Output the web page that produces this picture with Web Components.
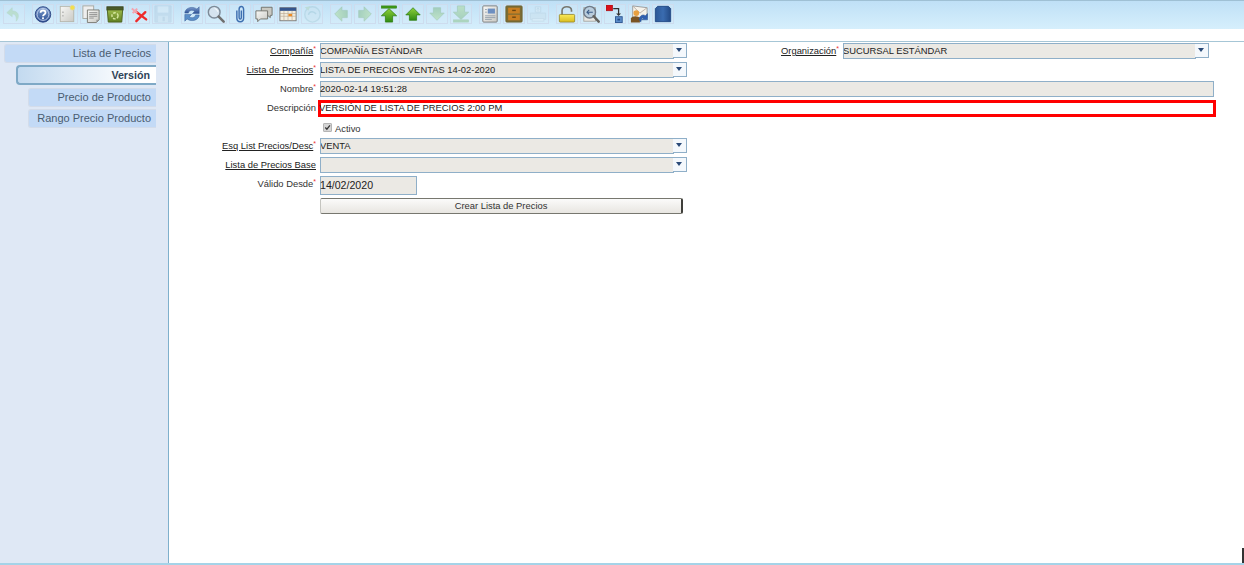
<!DOCTYPE html>
<html lang="es"><head><meta charset="utf-8"><title>Lista de Precios</title>
<style>html,body{margin:0;padding:0;background:#fff;font-family:"Liberation Sans",Arial,sans-serif}</style>
</head><body>
<x-app></x-app>
<script>
const grads=`<defs>
<linearGradient id="gb" x1="0" y1="0" x2="0" y2="1"><stop offset="0" stop-color="#7f9fd0"/><stop offset="1" stop-color="#2c4f93"/></linearGradient>
<linearGradient id="gg" x1="0" y1="0" x2="0" y2="1"><stop offset="0" stop-color="#8fd03a"/><stop offset="1" stop-color="#2f8a12"/></linearGradient>
<linearGradient id="gy" x1="0" y1="0" x2="0" y2="1"><stop offset="0" stop-color="#f9e95a"/><stop offset="1" stop-color="#d9bd20"/></linearGradient>
<linearGradient id="gt" x1="0" y1="0" x2="0" y2="1"><stop offset="0" stop-color="#9bb84a"/><stop offset="1" stop-color="#5f7f22"/></linearGradient>
<linearGradient id="gp" x1="0" y1="0" x2="1" y2="1"><stop offset="0" stop-color="#f8f8f6"/><stop offset="1" stop-color="#c9c9c4"/></linearGradient>
<linearGradient id="gc" x1="0" y1="0" x2="1" y2="0"><stop offset="0" stop-color="#2c5896"/><stop offset=".5" stop-color="#3a6cb0"/><stop offset="1" stop-color="#234a85"/></linearGradient>
</defs>`;
const arrow=(r)=>`<path transform="rotate(${r} 10 10)" d="M10 3 18 11H14V17H6V11H2Z" fill="url(#gg)" stroke="#2b7a10" stroke-width=".8"/>`;
const ICONS={
undo:`<path d="M8 3 2 8.500 8 13V10C11 10 13 12 12.500 18 16 14 16.500 7 8 6.500Z" fill="#86c25a" stroke="#6aa84a" stroke-width=".6"/>`,
help:`<circle cx="10" cy="10.500" r="8.600" fill="url(#gb)" stroke="#2a4380"/><circle cx="10" cy="10.500" r="6.600" fill="none" stroke="#c5d3ec" stroke-width="1"/><path d="M7.300 8.500C7.300 5.300 12.800 5.300 12.800 8.500 12.800 10.500 10 10.500 10 12.500" fill="none" stroke="#fff" stroke-width="2"/><rect x="9" y="13.700" width="2" height="2" fill="#fff"/>`,
neu:`<rect x="2.500" y="1.500" width="15" height="17" fill="url(#gp)" stroke="#b5b5aa"/><circle cx="5.500" cy="8" r=".7" fill="#888"/><circle cx="5.500" cy="12" r=".7" fill="#888"/><circle cx="16" cy="3" r="2.500" fill="#f2e04a" stroke="#e5d890"/>`,
copy:`<rect x="1" y="1" width="12" height="14" fill="#eee" stroke="#a5a59e"/><path d="M6 5.500H19V16.500L16 19.500H6Z" fill="url(#gp)" stroke="#77776f"/><path d="M8 8.500H17M8 10.500H17M8 12.500H17M8 14.500H13" stroke="#777" stroke-width=".8"/><path d="M16 19.500V16.500H19Z" fill="#999"/>`,
trash:`<rect x="1" y="2" width="18" height="3.500" fill="#4a5a2a" stroke="#39451f"/><path d="M1.500 5.500H18.500L17.500 19H2.500Z" fill="url(#gt)" stroke="#4a5f1c"/><circle cx="10" cy="12" r="3.400" fill="none" stroke="#d6e8a0" stroke-width="1.600" stroke-dasharray="3 1.500"/>`,
del:`<path d="M6 7 18 16M17 8 7 18" stroke="#ee2a2a" stroke-width="2.600" stroke-linecap="round"/><path d="M2 4 8 9M8 4 3 9" stroke="#f3a5b0" stroke-width="2.200"/>`,
save:`<path d="M1 1H19V19H1Z" fill="#9fb9cf" stroke="#8cabc5"/><rect x="4" y="1.500" width="12" height="7" fill="#e4edf3"/><rect x="4.500" y="12" width="11" height="7" fill="#c8d8e4"/><rect x="9.500" y="13" width="2.500" height="5" fill="#8ba8c0"/>`,
refresh:`<path d="M2 9C2 3.500 10 .5 15.500 4.500L18 2V9.500H10.500L13 7C10 5 6.500 6 6 9Z" fill="url(#gb)" stroke="#2f5390" stroke-width=".5"/><path d="M18 11C18 16.500 10 19.500 4.500 15.500L2 18V10.500H9.500L7 13C10 15 13.500 14 14 11Z" fill="#5a8ec8" stroke="#2f5390" stroke-width=".5"/>`,
search:`<circle cx="8" cy="8" r="6.500" fill="#d5e3ef" stroke="#7d8a98" stroke-width="1.600"/><path d="M8.500 3.800A4.500 4.500 0 0 1 12 7.500" stroke="#fff" fill="none"/><path d="M13 13 18.500 18.500" stroke="#6f6f6f" stroke-width="2.800" stroke-linecap="round"/>`,
attach:`<path d="M6.500 6V14.500C6.500 20 14 20 14 14.500V5C14 .5 9 .5 9 5V14C9 16.300 11.500 16.300 11.500 14V6" fill="none" stroke="#3d6fb0" stroke-width="1.600"/>`,
chat:`<path d="M7 2.500H19V11.500H17V14L14 11.500H7Z" fill="#c9c9c2" stroke="#6d6d66"/><path d="M1 6.500H14V15.500H6L3 18.500V15.500H1Z" fill="url(#gp)" stroke="#6d6d66"/>`,
cal:`<rect x="1" y="3" width="18" height="14.500" fill="#f4efe0" stroke="#777"/><rect x="1" y="3" width="18" height="3.500" fill="#35558c"/><path d="M1 9.500H19M1 12.500H19M5.500 6.500V17.500M10 6.500V17.500M14.500 6.500V17.500" stroke="#b9a58e" stroke-width=".7"/><rect x="10.500" y="10" width="4" height="2.500" fill="#ee8a22"/>`,
hist:`<circle cx="10.500" cy="10.500" r="8.500" fill="#c7dfe8" stroke="#7fb0bc" stroke-width="1.600"/><path d="M6 11C7 6.500 12 6.500 14.500 10" fill="none" stroke="#6fa8b4" stroke-width="1.600"/><path d="M2 2.500 8 1.500 6 6.500Z" fill="#8fc080"/>`,
left:arrow(-90),right:arrow(90),up:arrow(0),down:arrow(180),
top:`<rect x="1.500" y="1" width="17" height="2.500" fill="#3f9a16" stroke="#2b7a10" stroke-width=".6"/><path d="M10 4 18.500 12H14V19H6V12H1.500Z" fill="url(#gg)" stroke="#2b7a10" stroke-width=".8"/>`,
bottom:`<rect x="1.500" y="16.500" width="17" height="2.500" fill="#3f9a16" stroke="#2b7a10" stroke-width=".6"/><path d="M10 16 18.500 8H14V1H6V8H1.500Z" fill="url(#gg)" stroke="#2b7a10" stroke-width=".8"/>`,
report:`<rect x="2" y="1" width="16" height="18" rx="1" fill="url(#gp)" stroke="#777"/><rect x="7.500" y="4" width="8" height="5.500" fill="#6d8fc0"/><path d="M4.500 5H6.500M4.500 8H6.500M4.500 12H16M4.500 14H16M4.500 16H12" stroke="#8a98a6" stroke-width=".9"/>`,
archive:`<rect x="1" y="1" width="18" height="18" rx="1" fill="#7c6c34" stroke="#6d6230"/><rect x="3.500" y="3" width="13" height="6.500" fill="#c97f22"/><rect x="3.500" y="10.800" width="13" height="6.200" fill="#c97f22"/><rect x="8" y="5.300" width="4" height="1.500" fill="#6b4510"/><rect x="8" y="12.800" width="4" height="1.500" fill="#6b4510"/>`,
print:`<path d="M7 2H13V8H7Z" fill="#e8eef2" stroke="#9db5c4"/><path d="M1.500 9H18.500V16H1.500Z" fill="#c5d6e0" stroke="#9db5c4"/><rect x="3.500" y="15" width="13" height="3" fill="#e8eef2" stroke="#a9bdca"/><path d="M10 3V7M8.500 5 10 3 11.500 5" stroke="#9db5c4" fill="none"/>`,
lock:`<path d="M4.500 11V6C4.500 .5 15 .5 15 6V7.500" fill="none" stroke="#77776f" stroke-width="1.800"/><rect x="1.500" y="10.500" width="17" height="8.500" rx="1" fill="url(#gy)" stroke="#8a7a20" stroke-width=".8"/>`,
zoomx:`<rect x="2" y="3" width="13" height="15" fill="#e8e8e4" stroke="#a5a5a0"/><circle cx="8.500" cy="8" r="6.500" fill="#b9cddd" stroke="#6f7a88" stroke-width="1.600"/><path d="M12 8H5.500M8 5.500 5.500 8 8 10.500" stroke="#3b5c88" stroke-width="1.200" fill="none"/><path d="M13 12.500 18.500 18.500" stroke="#62625e" stroke-width="2.800" stroke-linecap="round"/>`,
flow:`<rect x="0" y="0" width="7.500" height="6.500" fill="#d8101a" stroke="#8a1015" stroke-width=".5"/><path d="M8 4H14V10" fill="none" stroke="#333" stroke-width="1.400"/><path d="M11.300 9.500H16.700L14 12.200Z" fill="#333"/><rect x="10.500" y="13" width="7.500" height="6.500" fill="#5c8ecb" stroke="#2c5590"/><rect x="12.700" y="15.200" width="3" height="2" fill="#234a85"/>`,
mail:`<path d="M3 1 19 3V14H3Z" fill="#f5f2ea" stroke="#999"/><path d="M3 1 11 9 19 3" fill="none" stroke="#b9aaa0"/><circle cx="7" cy="9" r="3.200" fill="#e8a040"/><path d="M1 19.500V15C2 11.500 10 11.500 11 15V19.500Z" fill="#7a5424"/><path d="M10 16C11 11 15 10 17 12L19.500 9.500V16.500H13L15 14.500C14 13.500 13 14 12 19Z" fill="#2f5fb0" stroke="#234a85" stroke-width=".5"/>`,
prod:`<path d="M1.500 4 4 1.500H16L18.500 4V18.500H1.500Z" fill="url(#gc)" stroke="#234a85"/>`
};
const def=(n,c)=>customElements.define(n,c);
const tpl=(html)=>{const t=document.createElement('template');t.innerHTML=html;return t};

class ToolBtn extends HTMLElement{
 constructor(){super();const s=this.attachShadow({mode:'open'});
  const k=this.getAttribute('icon');const off=this.hasAttribute('off');
  s.innerHTML=`<style>:host{display:flex;width:22px;height:20px;align-items:center;justify-content:center;box-sizing:border-box;border:1px solid #cddcee;background:rgba(215,235,250,.3);flex:none}
  svg{width:18px;height:18px;display:block;flex:none;${off?'opacity:.25':''}}</style>
  <svg viewBox="0 0 20 20" aria-hidden="true">${grads.replace(/id="(g\w)"/g,`id="$1${k}"`)}${ICONS[k].replace(/url\(#(g\w)\)/g,`url(#$1${k})`)}</svg>`;}
}
def('x-tool-btn',ToolBtn);

const tt=tpl(`<style>:host{display:flex;gap:2px;margin-right:7px}</style><slot></slot>`);
class ToolGroup extends HTMLElement{constructor(){super();this.attachShadow({mode:'open'}).append(tt.content.cloneNode(true))}}
def('x-tool-group',ToolGroup);

const tb=tpl(`<style>:host{display:block;height:42px;box-sizing:border-box;border-top:1px solid #9fc0d4;border-bottom:1px solid #a6c6d6;background:linear-gradient(#fff,#fff) 0 28px/100% 100% no-repeat,linear-gradient(#bfe0f6,#d6effc 28px)}
.r{display:flex;padding:3px 0 0 3px;gap:0}</style><div class="r"><slot></slot></div>`);
class Toolbar extends HTMLElement{constructor(){super();this.attachShadow({mode:'open'}).append(tb.content.cloneNode(true))}}
def('x-toolbar',Toolbar);

const tabT=tpl(`<style>:host{display:block;box-sizing:border-box;height:19px;margin-left:var(--in,0);margin-bottom:2px;background:#c3daf6;border:1px solid #d3dcea;border-right:0;border-radius:3px 0 0 3px;font:11px/16px "Liberation Sans",Arial,sans-serif;color:#4a5c70;text-align:right;padding-right:5px;white-space:nowrap}
:host([active]){height:20px;margin:1px 0 3px var(--in,0);border:2px solid #7fa9c6;border-right:0;border-radius:4px 0 0 4px;background:linear-gradient(90deg,#c3daf0,#fff 85%);font-weight:bold;font-size:10.700px;color:#2f4458;line-height:16px;padding-right:6px}</style><slot></slot>`);
class Tab extends HTMLElement{constructor(){super();this.attachShadow({mode:'open'}).append(tabT.content.cloneNode(true))}}
def('x-tab',Tab);

const sideT=tpl(`<style>:host{display:block;width:169px;flex:none;box-sizing:border-box;padding:2px 12px 0 4px;background:#dfe8f5;border-right:1px solid #7fb0cc}</style><slot></slot>`);
class Side extends HTMLElement{constructor(){super();this.attachShadow({mode:'open'}).append(sideT.content.cloneNode(true))}}
def('x-side',Side);

const lblT=tpl(`<style>:host{display:block;grid-column:1;font:9.400px/12px "Liberation Sans",Arial,sans-serif;color:#333;text-align:right;white-space:nowrap;padding-right:4px;align-self:start;margin-top:2px}
:host([link]) span{text-decoration:underline;color:#222}
i{font-style:normal;color:#e33;font-size:7px;vertical-align:3px;line-height:0}</style><span><slot></slot></span>`);
class Label extends HTMLElement{constructor(){super();const s=this.attachShadow({mode:'open'});s.append(lblT.content.cloneNode(true));
 if(this.hasAttribute('req')){const i=document.createElement('i');i.textContent='*';s.append(i)}}}
def('x-label',Label);

const selT=tpl(`<style>:host{display:block;height:16px;position:relative;font:9.400px/14px "Liberation Sans",Arial,sans-serif;color:#222}
.v{box-sizing:border-box;height:16px;margin-right:13px;background:#ebe9e4;border:1px solid #8fafc8;white-space:nowrap;overflow:hidden;text-indent:-1px}
.b{position:absolute;right:0;top:0;width:14px;height:15px;box-sizing:border-box;background:#f4f8fc;border:1px solid #8fafc8;border-left:0}
.b::after{content:"";position:absolute;left:3px;top:4px;border:3.500px solid transparent;border-top:4px solid #2a4a78;border-bottom:0}</style>
<div class="v"><slot></slot></div><div class="b"></div>`);
class Select extends HTMLElement{constructor(){super();this.attachShadow({mode:'open'}).append(selT.content.cloneNode(true))}}
def('x-select',Select);

const inT=tpl(`<style>:host{display:block;box-sizing:border-box;height:16px;background:#ebe9e4;border:1px solid #8fafc8;font:9.400px/13px "Liberation Sans",Arial,sans-serif;color:#222;white-space:nowrap;text-indent:-1px}
:host([big]){height:19px;font-size:10.600px;line-height:17px}
:host([error]){height:17px;background:#fff;border:3px solid #f00;line-height:9px;margin:0 0 0 -2px;color:#222;text-indent:-2px}</style><slot></slot>`);
class Input extends HTMLElement{constructor(){super();this.attachShadow({mode:'open'}).append(inT.content.cloneNode(true))}}
def('x-input',Input);

const chkT=tpl(`<style>:host{display:flex;align-items:flex-start;font:9.400px/12px "Liberation Sans",Arial,sans-serif;color:#333;padding:2px 0 0 3px}
.c{box-sizing:border-box;width:9px;height:9px;background:#d5d5d5;border:1px solid #b5b5b5;border-radius:1px;margin:1px 3px 0 0;position:relative}
svg{position:absolute;left:0;top:0;width:7px;height:7px}.t{margin-top:1px}</style>
<div class="c"><svg viewBox="0 0 8 8"><path d="M1.500 4 3.300 6 6.800 1.500" fill="none" stroke="#333" stroke-width="1.400"/></svg></div><span class="t"><slot></slot></span>`);
class Check extends HTMLElement{constructor(){super();this.attachShadow({mode:'open'}).append(chkT.content.cloneNode(true))}}
def('x-check',Check);

const btnT=tpl(`<style>:host{display:block;box-sizing:border-box;height:16px;background:linear-gradient(#fbfbfa,#e8e6e1);border:1px solid #c5c5c0;border-right:2px solid #3f3f3a;border-bottom:1px solid #77776f;border-top:1px solid #77776f;border-radius:2px;font:9.400px/14px "Liberation Sans",Arial,sans-serif;color:#333;text-align:center}</style><slot></slot>`);
class Btn extends HTMLElement{constructor(){super();this.attachShadow({mode:'open'}).append(btnT.content.cloneNode(true))}}
def('x-btn',Btn);

const formT=tpl(`<style>:host{display:grid;flex:1;align-content:start;grid-template-columns:151px 367px 156px 366px;grid-template-rows:16px 16px 16px 17px 15px 16px 16px 19px 16px;row-gap:3px;padding-top:1px;min-width:0}</style>
<slot></slot>`);
class Form extends HTMLElement{constructor(){super();this.attachShadow({mode:'open'}).append(formT.content.cloneNode(true))}}
def('x-form',Form);

class App extends HTMLElement{constructor(){super();const s=this.attachShadow({mode:'open'});
const ic=(g)=>`<x-tool-group>${g.map(a=>`<x-tool-btn icon="${a.replace('!','')}" ${a.endsWith('!')?'off':''}></x-tool-btn>`).join('')}</x-tool-group>`;
s.innerHTML=`<style>:host{display:flex;flex-direction:column;height:565px;width:1244px;overflow:hidden;position:relative;box-sizing:border-box;border-bottom:2px solid #a5d3e8}
.m{display:flex;flex:1;min-height:0}
.mark{position:absolute;right:0;bottom:0;width:2px;height:15px;background:#333}
x-input[wide]{grid-column:2/span 3;width:894px}
x-input[err]{grid-column:2/span 3;width:898px}
x-input[date]{width:97px;justify-self:start;grid-column:2}
x-btn{width:363px;grid-column:2}
x-check{grid-column:2}
x-select[col2]{grid-column:2}
x-select[col4]{grid-column:4}
x-label[second]{grid-column:3}
</style>
<x-toolbar>
${ic(['undo!'])}${ic(['help','neu','copy','trash','del','save!'])}${ic(['refresh','search','attach','chat','cal','hist!'])}${ic(['left!','right!','top','up','down!','bottom!'])}${ic(['report','archive','print!'])}${ic(['lock','zoomx','flow','mail','prod'])}
</x-toolbar>
<div class="m">
<x-side>
<x-tab>Lista de Precios</x-tab>
<x-tab active style="--in:12px">Versión</x-tab>
<x-tab style="--in:24px">Precio de Producto</x-tab>
<x-tab style="--in:24px">Rango Precio Producto</x-tab>
</x-side>
<x-form>
<x-label req link>Compañía</x-label><x-select col2>COMPAÑÍA ESTÁNDAR</x-select><x-label req link second>Organización</x-label><x-select col4>SUCURSAL ESTÁNDAR</x-select>
<x-label req link>Lista de Precios</x-label><x-select col2>LISTA DE PRECIOS VENTAS 14-02-2020</x-select>
<x-label req>Nombre</x-label><x-input wide>2020-02-14 19:51:28</x-input>
<x-label>Descripción</x-label><x-input err error>VERSIÓN DE LISTA DE PRECIOS 2:00 PM</x-input>
<x-check>Activo</x-check>
<x-label req link>Esq List Precios/Desc</x-label><x-select col2>VENTA</x-select>
<x-label link>Lista de Precios Base</x-label><x-select col2></x-select>
<x-label req>Válido Desde</x-label><x-input date big>14/02/2020</x-input>
<x-btn>Crear Lista de Precios</x-btn>
</x-form>
</div>
<div class="mark"></div>`;}}
def('x-app',App);
</script>
</body></html>
